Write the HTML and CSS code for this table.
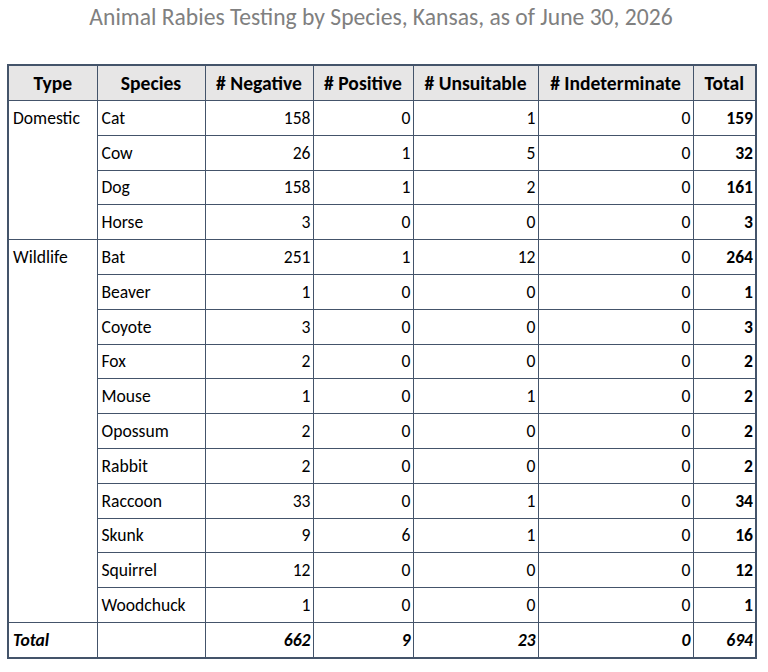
FILE: index.html
```html
<!DOCTYPE html>
<html>
<head>
<meta charset="utf-8">
<link rel="stylesheet" href="styles.css">
</head>
<body>
<div class="page">
  <h1 class="title">Animal Rabies Testing by Species, Kansas, as of June 30, 2026</h1>
  <table class="rabies">
    <colgroup>
      <col class="c-type"><col class="c-species"><col class="c-neg"><col class="c-pos"><col class="c-uns"><col class="c-ind"><col class="c-tot">
    </colgroup>
    <thead>
      <tr><th>Type</th><th>Species</th><th># Negative</th><th># Positive</th><th># Unsuitable</th><th># Indeterminate</th><th>Total</th></tr>
    </thead>
    <tbody>
      <tr><td class="type" rowspan="4">Domestic</td><td>Cat</td><td class="num">158</td><td class="num">0</td><td class="num">1</td><td class="num">0</td><td class="num tot">159</td></tr>
      <tr><td>Cow</td><td class="num">26</td><td class="num">1</td><td class="num">5</td><td class="num">0</td><td class="num tot">32</td></tr>
      <tr><td>Dog</td><td class="num">158</td><td class="num">1</td><td class="num">2</td><td class="num">0</td><td class="num tot">161</td></tr>
      <tr><td>Horse</td><td class="num">3</td><td class="num">0</td><td class="num">0</td><td class="num">0</td><td class="num tot">3</td></tr>
      <tr><td class="type" rowspan="11">Wildlife</td><td>Bat</td><td class="num">251</td><td class="num">1</td><td class="num">12</td><td class="num">0</td><td class="num tot">264</td></tr>
      <tr><td>Beaver</td><td class="num">1</td><td class="num">0</td><td class="num">0</td><td class="num">0</td><td class="num tot">1</td></tr>
      <tr><td>Coyote</td><td class="num">3</td><td class="num">0</td><td class="num">0</td><td class="num">0</td><td class="num tot">3</td></tr>
      <tr><td>Fox</td><td class="num">2</td><td class="num">0</td><td class="num">0</td><td class="num">0</td><td class="num tot">2</td></tr>
      <tr><td>Mouse</td><td class="num">1</td><td class="num">0</td><td class="num">1</td><td class="num">0</td><td class="num tot">2</td></tr>
      <tr><td>Opossum</td><td class="num">2</td><td class="num">0</td><td class="num">0</td><td class="num">0</td><td class="num tot">2</td></tr>
      <tr><td>Rabbit</td><td class="num">2</td><td class="num">0</td><td class="num">0</td><td class="num">0</td><td class="num tot">2</td></tr>
      <tr><td>Raccoon</td><td class="num">33</td><td class="num">0</td><td class="num">1</td><td class="num">0</td><td class="num tot">34</td></tr>
      <tr><td>Skunk</td><td class="num">9</td><td class="num">6</td><td class="num">1</td><td class="num">0</td><td class="num tot">16</td></tr>
      <tr><td>Squirrel</td><td class="num">12</td><td class="num">0</td><td class="num">0</td><td class="num">0</td><td class="num tot">12</td></tr>
      <tr><td>Woodchuck</td><td class="num">1</td><td class="num">0</td><td class="num">0</td><td class="num">0</td><td class="num tot">1</td></tr>
      <tr class="total-row"><td>Total</td><td></td><td class="num">662</td><td class="num">9</td><td class="num">23</td><td class="num">0</td><td class="num">694</td></tr>
    </tbody>
  </table>
</div>
</body>
</html>
```

FILE: styles.css
```css
html, body {
  margin: 0;
  padding: 0;
  background: #ffffff;
}

.page {
  padding: 0 0 0 7px;
  width: 748px;
  font-family: Carlito, Lato, "Liberation Sans", sans-serif;
  color: #000000;
}

.title {
  margin: 0;
  height: 64px;
  padding-top: 2px;
  box-sizing: border-box;
  font-size: 23.6px;
  line-height: 30px;
  font-weight: normal;
  color: #808080;
  text-align: center;
}

.rabies {
  width: 748px;
  table-layout: fixed;
  border-collapse: collapse;
  border: 2px solid #44546a;
  font-size: 17.6px;
}

.c-type { width: 89px; }
.c-species { width: 108px; }
.c-neg { width: 108px; }
.c-pos { width: 100px; }
.c-uns { width: 125px; }
.c-ind { width: 155px; }
.c-tot { width: 63px; }

.rabies th {
  height: 34px;
  background: #e7e6e6;
  border: 1px solid #44546a;
  font-weight: bold;
  font-size: 19.6px;
  text-align: center;
  padding: 0 2px;
}

.rabies td {
  height: 33.8px;
  border: 1px solid #44546a;
  padding: 0 4px;
  text-align: left;
  vertical-align: middle;
  white-space: nowrap;
}

.rabies td.type {
  vertical-align: top;
  padding-top: 6px;
}

.rabies td.num {
  text-align: right;
  padding-right: 2px;
}

.rabies td.tot {
  font-weight: bold;
}

.total-row td {
  font-weight: bold;
  font-style: italic;
}
```
